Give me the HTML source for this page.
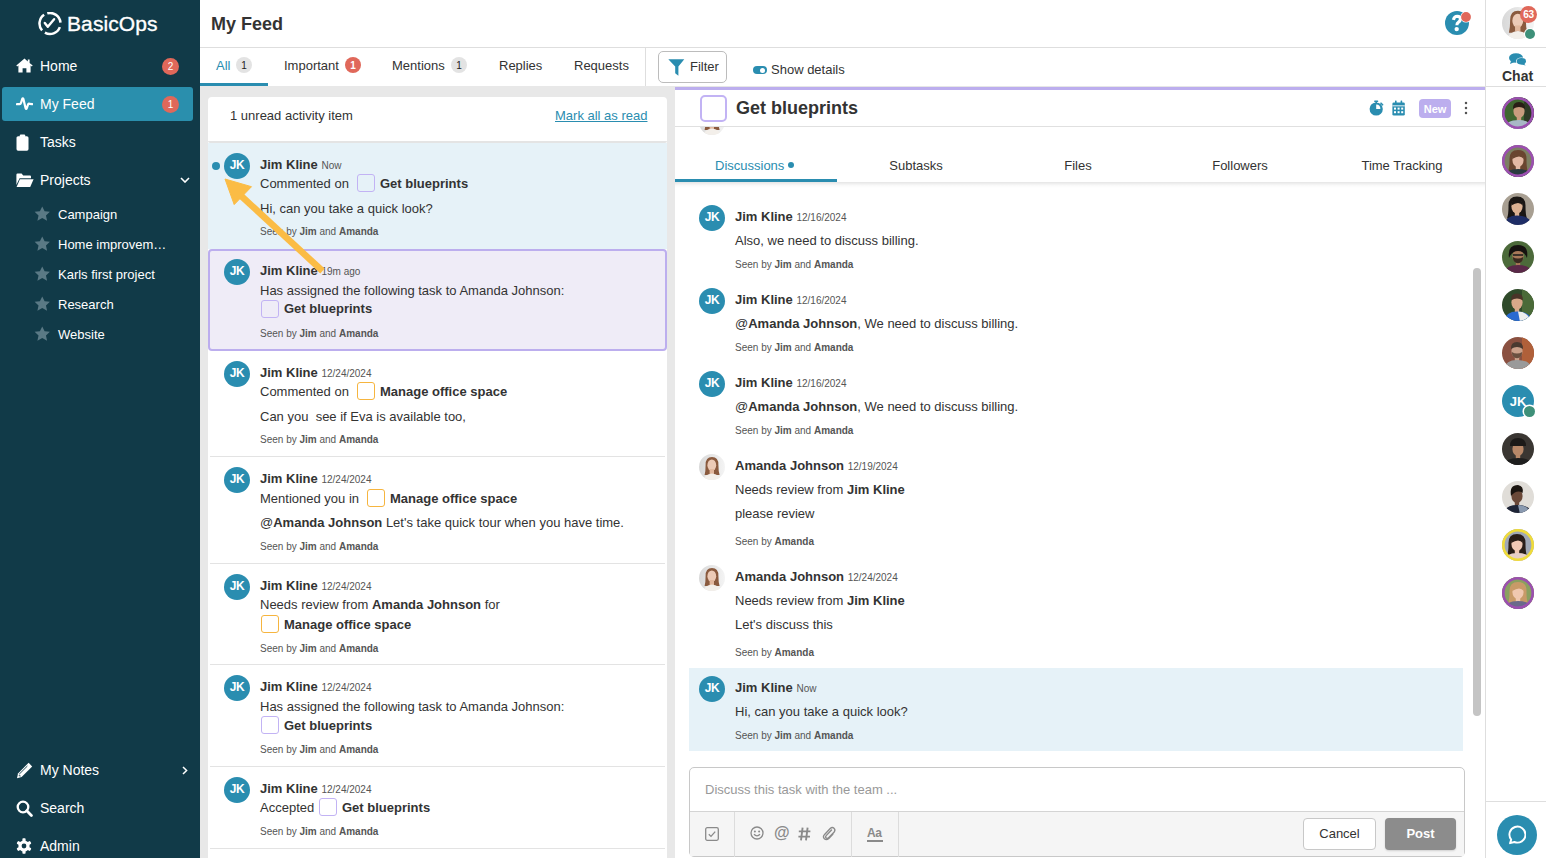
<!DOCTYPE html>
<html><head><meta charset="utf-8"><title>My Feed</title>
<style>
*{box-sizing:border-box;margin:0;padding:0}
html,body{width:1546px;height:858px;overflow:hidden;background:#fff;font-family:"Liberation Sans",sans-serif;color:#333}
.a{position:absolute}
.t{position:absolute;white-space:nowrap}
b{font-weight:700}
</style></head><body>
<div class="a" style="left:0px;top:0px;width:200px;height:858px;background:#113a48;"></div>
<svg class="a" style="left:38px;top:12px" width="24" height="24" viewBox="0 0 24 24">
<path d="M6.13 2.8 A10.5 10.5 0 0 0 4.08 18.39" fill="none" stroke="#fff" stroke-width="2.5" stroke-linecap="butt"/>
<path d="M9.28 1.36 A10.5 10.5 0 0 1 22.46 10.58" fill="none" stroke="#fff" stroke-width="2.5" stroke-linecap="butt"/>
<path d="M21.87 15.09 A10.5 10.5 0 0 1 6.91 20.68" fill="none" stroke="#fff" stroke-width="2.5" stroke-linecap="butt"/>
<path d="M6.8 10.9 L9.8 14.7 L16.1 7.2" fill="none" stroke="#fff" stroke-width="2.4" stroke-linecap="round" stroke-linejoin="round"/>
</svg>
<div class="t" style="left:67px;top:13px;font-size:21px;line-height:21px;color:#fff;letter-spacing:0.1px;-webkit-text-stroke:0.35px #fff">BasicOps</div>
<div class="a" style="left:2px;top:87px;width:191px;height:34px;background:#2a8fad;border-radius:3px"></div>
<div class="t" style="left:40px;top:59px;font-size:14px;line-height:14px;color:#fff">Home</div>
<div class="a" style="left:162px;top:58px;width:17px;height:17px;background:#e0685a;border-radius:50%"></div>
<div class="t" style="left:162px;top:62px;font-size:10px;line-height:10px;color:#fff;width:17px;text-align:center">2</div>
<div class="t" style="left:40px;top:97px;font-size:14px;line-height:14px;color:#fff">My Feed</div>
<div class="a" style="left:162px;top:96px;width:17px;height:17px;background:#e0685a;border-radius:50%"></div>
<div class="t" style="left:162px;top:100px;font-size:10px;line-height:10px;color:#fff;width:17px;text-align:center">1</div>
<div class="t" style="left:40px;top:135px;font-size:14px;line-height:14px;color:#fff">Tasks</div>
<div class="t" style="left:40px;top:173px;font-size:14px;line-height:14px;color:#fff">Projects</div>
<svg class="a" style="left:16px;top:58px" width="17" height="15" viewBox="0 0 17 15"><path d="M8.5 0.6 L0.3 7.6 L1.2 8.6 L2.4 7.6 L2.4 14.6 L6.6 14.6 L6.6 10.2 L10.4 10.2 L10.4 14.6 L14.6 14.6 L14.6 7.6 L15.8 8.6 L16.7 7.6 L13.6 4.9 L13.6 1.5 L11.8 1.5 L11.8 3.4 Z" fill="#fff"/></svg>
<svg class="a" style="left:16px;top:97px" width="17" height="14" viewBox="0 0 17 14"><path d="M0.9 7.2 L3.6 7.2 Q4.6 7.2 5.1 5.6 L6.2 2 Q6.8 0.6 7.4 2 L9.6 11.2 Q10.2 12.8 10.8 11.2 L12 7.6 Q12.6 6.2 13.4 6.8 L16.2 7.2" fill="none" stroke="#fff" stroke-width="2.2" stroke-linejoin="round" stroke-linecap="round"/></svg>
<svg class="a" style="left:16px;top:134px" width="14" height="17" viewBox="0 0 14 17"><rect x="0.5" y="2.2" width="12" height="14.5" rx="1.6" fill="#fff"/><rect x="3.8" y="0.6" width="5.4" height="3.2" rx="1" fill="#fff"/></svg>
<svg class="a" style="left:16px;top:173px" width="18" height="15" viewBox="0 0 18 15"><path d="M0.4 1.8 Q0.4 0.6 1.6 0.6 L5.6 0.6 L7.2 2.4 L14 2.4 Q15 2.4 15 3.4 L15 5.2 L3.6 5.2 L0.4 12 Z" fill="#fff"/><path d="M3.9 6.3 L17.6 6.3 L14.2 13.9 L0.6 13.9 Z" fill="#fff"/></svg>
<svg class="a" style="left:180px;top:177px" width="10" height="6" viewBox="0 0 10 6"><path d="M1 1 L5 5 L9 1" fill="none" stroke="#fff" stroke-width="1.6"/></svg>
<svg class="a" style="left:33.5px;top:206px" width="16.5" height="16" viewBox="0 0 16 15.5"><path d="M8 0.4 L10.3 5 L15.4 5.6 L11.6 9.1 L12.7 14.2 L8 11.6 L3.3 14.2 L4.4 9.1 L0.6 5.6 L5.7 5 Z" fill="#5a7985"/></svg>
<div class="t" style="left:58px;top:208px;font-size:13px;line-height:13px;color:#fff">Campaign</div>
<svg class="a" style="left:33.5px;top:236px" width="16.5" height="16" viewBox="0 0 16 15.5"><path d="M8 0.4 L10.3 5 L15.4 5.6 L11.6 9.1 L12.7 14.2 L8 11.6 L3.3 14.2 L4.4 9.1 L0.6 5.6 L5.7 5 Z" fill="#5a7985"/></svg>
<div class="t" style="left:58px;top:238px;font-size:13px;line-height:13px;color:#fff">Home improvem…</div>
<svg class="a" style="left:33.5px;top:266px" width="16.5" height="16" viewBox="0 0 16 15.5"><path d="M8 0.4 L10.3 5 L15.4 5.6 L11.6 9.1 L12.7 14.2 L8 11.6 L3.3 14.2 L4.4 9.1 L0.6 5.6 L5.7 5 Z" fill="#5a7985"/></svg>
<div class="t" style="left:58px;top:268px;font-size:13px;line-height:13px;color:#fff">Karls first project</div>
<svg class="a" style="left:33.5px;top:296px" width="16.5" height="16" viewBox="0 0 16 15.5"><path d="M8 0.4 L10.3 5 L15.4 5.6 L11.6 9.1 L12.7 14.2 L8 11.6 L3.3 14.2 L4.4 9.1 L0.6 5.6 L5.7 5 Z" fill="#5a7985"/></svg>
<div class="t" style="left:58px;top:298px;font-size:13px;line-height:13px;color:#fff">Research</div>
<svg class="a" style="left:33.5px;top:326px" width="16.5" height="16" viewBox="0 0 16 15.5"><path d="M8 0.4 L10.3 5 L15.4 5.6 L11.6 9.1 L12.7 14.2 L8 11.6 L3.3 14.2 L4.4 9.1 L0.6 5.6 L5.7 5 Z" fill="#5a7985"/></svg>
<div class="t" style="left:58px;top:328px;font-size:13px;line-height:13px;color:#fff">Website</div>
<div class="t" style="left:40px;top:763px;font-size:14px;line-height:14px;color:#fff">My Notes</div>
<div class="t" style="left:40px;top:801px;font-size:14px;line-height:14px;color:#fff">Search</div>
<div class="t" style="left:40px;top:839px;font-size:14px;line-height:14px;color:#fff">Admin</div>
<svg class="a" style="left:16px;top:762px" width="17" height="17" viewBox="0 0 17 17"><path d="M12.6 0.8 L16.2 4.4 L5.6 15 L1 16.2 L2 11.4 Z" fill="#fff"/><path d="M3.2 12.2 L11.4 4 M2.8 13.6 L4.6 14" stroke="#113a48" stroke-width="0.9"/></svg>
<svg class="a" style="left:182px;top:766px" width="6" height="9" viewBox="0 0 6 9"><path d="M1 1 L4.6 4.5 L1 8" fill="none" stroke="#fff" stroke-width="1.5"/></svg>
<svg class="a" style="left:16px;top:800px" width="17" height="17" viewBox="0 0 17 17"><circle cx="7" cy="7" r="5.3" fill="none" stroke="#fff" stroke-width="2.3"/><path d="M10.8 10.8 L15.4 15.4" stroke="#fff" stroke-width="2.8" stroke-linecap="round"/></svg>
<svg class="a" style="left:16px;top:838px" width="16" height="16" viewBox="0 0 16 16"><g fill="#fff"><circle cx="8" cy="8" r="5.6"/><rect x="6.4" y="0.3" width="3.2" height="15.4" rx="0.8"/><rect x="6.4" y="0.3" width="3.2" height="15.4" rx="0.8" transform="rotate(60 8 8)"/><rect x="6.4" y="0.3" width="3.2" height="15.4" rx="0.8" transform="rotate(120 8 8)"/></g><circle cx="8" cy="8" r="2.4" fill="#113a48"/></svg>
<div class="a" style="left:200px;top:47px;width:1285px;height:1px;background:#dedede;"></div>
<div class="t" style="left:211px;top:15px;font-size:18px;line-height:18px;font-weight:700;color:#333333">My Feed</div>
<svg class="a" style="left:1444px;top:10px" width="30" height="26" viewBox="0 0 30 26">
<circle cx="13" cy="13" r="12" fill="#2a8db0"/>
<path d="M9.4 9.8 Q10.2 6.3 13.3 6.3 Q16.4 6.4 16.4 9.2 Q16.3 11.1 14.3 12.3 Q12.9 13.1 12.9 15.2" fill="none" stroke="#fff" stroke-width="3.1" stroke-linecap="butt"/>
<circle cx="12.7" cy="19.1" r="2.2" fill="#fff"/>
<circle cx="22" cy="7" r="5.6" fill="#fff"/>
<circle cx="22" cy="7" r="4.9" fill="#e0685a"/>
</svg>
<div class="t" style="left:216px;top:59px;font-size:13px;line-height:13px;color:#2a8db0">All</div>
<div class="a" style="left:236px;top:57px;width:16px;height:16px;background:#e3e3e3;border-radius:50%"></div>
<div class="t" style="left:236px;top:61px;font-size:10px;line-height:10px;color:#222;width:16px;text-align:center">1</div>
<div class="a" style="left:200px;top:83px;width:68px;height:3px;background:#2a8db0;"></div>
<div class="t" style="left:284px;top:59px;font-size:13px;line-height:13px;color:#333333">Important</div>
<div class="a" style="left:345px;top:57px;width:16px;height:16px;background:#e0685a;border-radius:50%"></div>
<div class="t" style="left:345px;top:61px;font-size:10px;line-height:10px;font-weight:700;color:#fff;width:16px;text-align:center">1</div>
<div class="t" style="left:392px;top:59px;font-size:13px;line-height:13px;color:#333333">Mentions</div>
<div class="a" style="left:451px;top:57px;width:16px;height:16px;background:#e3e3e3;border-radius:50%"></div>
<div class="t" style="left:451px;top:61px;font-size:10px;line-height:10px;color:#222;width:16px;text-align:center">1</div>
<div class="t" style="left:499px;top:59px;font-size:13px;line-height:13px;color:#333333">Replies</div>
<div class="t" style="left:574px;top:59px;font-size:13px;line-height:13px;color:#333333">Requests</div>
<div class="a" style="left:645px;top:47px;width:1px;height:39px;background:#dedede;"></div>
<div class="a" style="left:658px;top:51px;width:69px;height:32px;background:#fff;border:1px solid #bcbcbc;border-radius:5px;box-sizing:border-box"></div>
<svg class="a" style="left:668px;top:59px" width="17" height="17" viewBox="0 0 17 17"><path d="M0.3 0.3 L16.3 0.3 L10.4 7.4 L10.4 16.8 L7.2 14.2 L7.2 7.4 Z" fill="#2a8db0"/></svg>
<div class="t" style="left:690px;top:60px;font-size:13px;line-height:13px;color:#333333">Filter</div>
<div class="a" style="left:753px;top:66px;width:14px;height:8px;background:#2a8db0;border-radius:4px"></div>
<div class="a" style="left:760px;top:67.5px;width:5px;height:5px;background:#fff;border-radius:50%"></div>
<div class="t" style="left:771px;top:63px;font-size:13px;line-height:13px;color:#333333">Show details</div>
<div class="a" style="left:200px;top:86px;width:475px;height:772px;background:#e8e8e8;"></div>
<div class="a" style="left:208px;top:97px;width:459px;height:761px;background:#fff;border-radius:4px 4px 0 0"></div>
<div class="t" style="left:230px;top:109px;font-size:13px;line-height:13px;color:#333333">1 unread activity item</div>
<div class="t" style="left:555px;top:109px;font-size:13px;line-height:13px;color:#2a8db0;text-decoration:underline">Mark all as read</div>
<div class="a" style="left:208px;top:143px;width:459px;height:106px;background:#e6f2f8;"></div>
<div class="a" style="left:208px;top:141px;width:459px;height:2px;background:#e4e4e4;border-radius:0 0 3px 3px"></div>
<div class="a" style="left:212px;top:162px;width:8px;height:8px;background:#2a8db0;border-radius:50%"></div>
<div class="a" style="left:224.0px;top:153.0px;width:26px;height:26px;background:#2a8db0;border-radius:50%"></div>
<div class="t" style="left:224.0px;top:159px;font-size:12px;line-height:12px;font-weight:700;color:#fff;width:26px;text-align:center;letter-spacing:-0.5px">JK</div>
<div class="t" style="left:260px;top:158px;font-size:13px;line-height:13px;font-weight:700;color:#333333">Jim Kline <span style="font-size:10px;font-weight:400;color:#555">Now</span></div>
<div class="t" style="left:260px;top:177px;font-size:13px;line-height:13px;color:#333333">Commented on</div>
<div class="a" style="left:357px;top:174px;width:18px;height:18px;background:transparent;border:1.5px solid #c2b3f4;border-radius:3px;box-sizing:border-box"></div>
<div class="t" style="left:380px;top:177px;font-size:13px;line-height:13px;font-weight:700;color:#333333">Get blueprints</div>
<div class="t" style="left:260px;top:201.5px;font-size:13px;line-height:13px;color:#333333">Hi, can you take a quick look?</div>
<div class="t" style="left:260px;top:227px;font-size:10px;line-height:10px;color:#555555">Seen by <b>Jim</b> and <b>Amanda</b></div>
<div class="a" style="left:208px;top:249px;width:459px;height:102px;background:#efecf7;border:2px solid #bcaeee;border-radius:4px;box-sizing:border-box"></div>
<div class="a" style="left:224.0px;top:259.0px;width:26px;height:26px;background:#2a8db0;border-radius:50%"></div>
<div class="t" style="left:224.0px;top:265px;font-size:12px;line-height:12px;font-weight:700;color:#fff;width:26px;text-align:center;letter-spacing:-0.5px">JK</div>
<div class="t" style="left:260px;top:264px;font-size:13px;line-height:13px;font-weight:700;color:#333333">Jim Kline <span style="font-size:10px;font-weight:400;color:#555">19m ago</span></div>
<div class="t" style="left:260px;top:284px;font-size:13px;line-height:13px;color:#333333">Has assigned the following task to Amanda Johnson:</div>
<div class="a" style="left:261px;top:300px;width:18px;height:18px;background:transparent;border:1.5px solid #c2b3f4;border-radius:3px;box-sizing:border-box"></div>
<div class="t" style="left:284px;top:302px;font-size:13px;line-height:13px;font-weight:700;color:#333333">Get blueprints</div>
<div class="t" style="left:260px;top:329px;font-size:10px;line-height:10px;color:#555555">Seen by <b>Jim</b> and <b>Amanda</b></div>
<div class="a" style="left:224.0px;top:361.0px;width:26px;height:26px;background:#2a8db0;border-radius:50%"></div>
<div class="t" style="left:224.0px;top:367px;font-size:12px;line-height:12px;font-weight:700;color:#fff;width:26px;text-align:center;letter-spacing:-0.5px">JK</div>
<div class="t" style="left:260px;top:366px;font-size:13px;line-height:13px;font-weight:700;color:#333333">Jim Kline <span style="font-size:10px;font-weight:400;color:#555">12/24/2024</span></div>
<div class="t" style="left:260px;top:385px;font-size:13px;line-height:13px;color:#333333">Commented on</div>
<div class="a" style="left:357px;top:382px;width:18px;height:18px;background:transparent;border:1.5px solid #f6b53f;border-radius:3px;box-sizing:border-box"></div>
<div class="t" style="left:380px;top:385px;font-size:13px;line-height:13px;font-weight:700;color:#333333">Manage office space</div>
<div class="t" style="left:260px;top:409.5px;font-size:13px;line-height:13px;color:#333333">Can you&nbsp; see if Eva is available too,</div>
<div class="t" style="left:260px;top:435px;font-size:10px;line-height:10px;color:#555555">Seen by <b>Jim</b> and <b>Amanda</b></div>
<div class="a" style="left:210px;top:456px;width:455px;height:1px;background:#e3e3e3;"></div>
<div class="a" style="left:224.0px;top:467.0px;width:26px;height:26px;background:#2a8db0;border-radius:50%"></div>
<div class="t" style="left:224.0px;top:473px;font-size:12px;line-height:12px;font-weight:700;color:#fff;width:26px;text-align:center;letter-spacing:-0.5px">JK</div>
<div class="t" style="left:260px;top:472px;font-size:13px;line-height:13px;font-weight:700;color:#333333">Jim Kline <span style="font-size:10px;font-weight:400;color:#555">12/24/2024</span></div>
<div class="t" style="left:260px;top:492px;font-size:13px;line-height:13px;color:#333333">Mentioned you in</div>
<div class="a" style="left:367px;top:489px;width:18px;height:18px;background:transparent;border:1.5px solid #f6b53f;border-radius:3px;box-sizing:border-box"></div>
<div class="t" style="left:390px;top:492px;font-size:13px;line-height:13px;font-weight:700;color:#333333">Manage office space</div>
<div class="t" style="left:260px;top:516px;font-size:13px;line-height:13px;color:#333333">@<b>Amanda Johnson</b> Let's take quick tour when you have time.</div>
<div class="t" style="left:260px;top:542px;font-size:10px;line-height:10px;color:#555555">Seen by <b>Jim</b> and <b>Amanda</b></div>
<div class="a" style="left:210px;top:563px;width:455px;height:1px;background:#e3e3e3;"></div>
<div class="a" style="left:224.0px;top:574.0px;width:26px;height:26px;background:#2a8db0;border-radius:50%"></div>
<div class="t" style="left:224.0px;top:580px;font-size:12px;line-height:12px;font-weight:700;color:#fff;width:26px;text-align:center;letter-spacing:-0.5px">JK</div>
<div class="t" style="left:260px;top:579px;font-size:13px;line-height:13px;font-weight:700;color:#333333">Jim Kline <span style="font-size:10px;font-weight:400;color:#555">12/24/2024</span></div>
<div class="t" style="left:260px;top:598px;font-size:13px;line-height:13px;color:#333333">Needs review from <b>Amanda Johnson</b> for</div>
<div class="a" style="left:261px;top:615px;width:18px;height:18px;background:transparent;border:1.5px solid #f6b53f;border-radius:3px;box-sizing:border-box"></div>
<div class="t" style="left:284px;top:618px;font-size:13px;line-height:13px;font-weight:700;color:#333333">Manage office space</div>
<div class="t" style="left:260px;top:644px;font-size:10px;line-height:10px;color:#555555">Seen by <b>Jim</b> and <b>Amanda</b></div>
<div class="a" style="left:210px;top:664px;width:455px;height:1px;background:#e3e3e3;"></div>
<div class="a" style="left:224.0px;top:675.0px;width:26px;height:26px;background:#2a8db0;border-radius:50%"></div>
<div class="t" style="left:224.0px;top:681px;font-size:12px;line-height:12px;font-weight:700;color:#fff;width:26px;text-align:center;letter-spacing:-0.5px">JK</div>
<div class="t" style="left:260px;top:680px;font-size:13px;line-height:13px;font-weight:700;color:#333333">Jim Kline <span style="font-size:10px;font-weight:400;color:#555">12/24/2024</span></div>
<div class="t" style="left:260px;top:700px;font-size:13px;line-height:13px;color:#333333">Has assigned the following task to Amanda Johnson:</div>
<div class="a" style="left:261px;top:716px;width:18px;height:18px;background:transparent;border:1.5px solid #c2b3f4;border-radius:3px;box-sizing:border-box"></div>
<div class="t" style="left:284px;top:719px;font-size:13px;line-height:13px;font-weight:700;color:#333333">Get blueprints</div>
<div class="t" style="left:260px;top:745px;font-size:10px;line-height:10px;color:#555555">Seen by <b>Jim</b> and <b>Amanda</b></div>
<div class="a" style="left:210px;top:766px;width:455px;height:1px;background:#e3e3e3;"></div>
<div class="a" style="left:224.0px;top:777.0px;width:26px;height:26px;background:#2a8db0;border-radius:50%"></div>
<div class="t" style="left:224.0px;top:783px;font-size:12px;line-height:12px;font-weight:700;color:#fff;width:26px;text-align:center;letter-spacing:-0.5px">JK</div>
<div class="t" style="left:260px;top:782px;font-size:13px;line-height:13px;font-weight:700;color:#333333">Jim Kline <span style="font-size:10px;font-weight:400;color:#555">12/24/2024</span></div>
<div class="t" style="left:260px;top:801px;font-size:13px;line-height:13px;color:#333333">Accepted</div>
<div class="a" style="left:319px;top:798px;width:18px;height:18px;background:transparent;border:1.5px solid #c2b3f4;border-radius:3px;box-sizing:border-box"></div>
<div class="t" style="left:342px;top:801px;font-size:13px;line-height:13px;font-weight:700;color:#333333">Get blueprints</div>
<div class="t" style="left:260px;top:827px;font-size:10px;line-height:10px;color:#555555">Seen by <b>Jim</b> and <b>Amanda</b></div>
<div class="a" style="left:210px;top:848px;width:455px;height:1px;background:#e3e3e3;"></div>
<svg class="a" style="left:200px;top:160px" width="140" height="130" viewBox="200 160 140 130">
<line x1="322.5" y1="271" x2="238" y2="193" stroke="#fbbc45" stroke-width="6.5" stroke-linecap="butt"/>
<path d="M225 179 L251.5 186.7 L234.2 204.6 Z" fill="#fbbc45" stroke="#fbbc45" stroke-width="1" stroke-linejoin="round"/>
</svg>
<div class="a" style="left:675px;top:86px;width:810px;height:772px;background:#fff;"></div>
<div class="a" style="left:675px;top:87px;width:810px;height:3px;background:#bcaeee;"></div>
<div class="a" style="left:675px;top:86px;width:810px;height:1px;background:#e6e6e6;"></div>
<svg class="a" style="left:699.0px;top:109.0px" width="26" height="26" viewBox="0 0 26 26">
<defs><clipPath id="cclip"><circle cx="13" cy="13" r="13"/></clipPath><linearGradient id="gclip" x1="0" x2="1"><stop offset="0" stop-color="#d8d8d8"/><stop offset="1" stop-color="#f4f4f4"/></linearGradient></defs>
<g clip-path="url(#cclip)"><rect width="26" height="26" fill="url(#gclip)"/>
<path d="M13 3 Q6.4 3 6.6 11 Q6.6 17 5.6 21 L20.6 21 Q19.4 17 19.4 11 Q19.6 3 13 3 Z" fill="#8a5a3e"/>
<ellipse cx="12.8" cy="11.2" rx="4.4" ry="5.8" fill="#eccab6"/>
<rect x="10.6" y="15" width="4.4" height="5" fill="#e2b89e"/>
<path d="M4 27 Q5 20.5 13 19.6 Q21 20.5 22 27 Z" fill="#f3efea"/></g></svg>
<div class="a" style="left:675px;top:90px;width:810px;height:36px;background:#fff;"></div>
<div class="a" style="left:675px;top:126px;width:810px;height:1px;background:#e0e0e0;"></div>
<div class="a" style="left:700px;top:95px;width:27px;height:27px;background:transparent;border:2px solid #c2b3f4;border-radius:5px;box-sizing:border-box"></div>
<div class="t" style="left:736px;top:99px;font-size:18px;line-height:18px;font-weight:700;color:#333333">Get blueprints</div>
<svg class="a" style="left:1369px;top:100px" width="16" height="16" viewBox="0 0 16 16">
<circle cx="7.2" cy="9" r="6.6" fill="#2a8db0"/>
<rect x="5.2" y="0.4" width="4" height="1.6" rx="0.5" fill="#2a8db0"/>
<rect x="6.4" y="1.5" width="1.6" height="1.6" fill="#2a8db0"/>
<path d="M12 3.2 L13.6 4.8" stroke="#2a8db0" stroke-width="1.6" stroke-linecap="round"/>
<path d="M7.2 4.6 L7.2 9 L11.4 9 A4.4 4.4 0 0 0 7.2 4.6 Z" fill="#fff"/>
</svg>
<svg class="a" style="left:1392px;top:100px" width="14" height="16" viewBox="0 0 14 16">
<rect x="0.4" y="2.4" width="12.4" height="13.2" rx="1.4" fill="#2a8db0"/>
<rect x="3" y="0.4" width="1.6" height="3.4" rx="0.6" fill="#2a8db0"/>
<rect x="8.6" y="0.4" width="1.6" height="3.4" rx="0.6" fill="#2a8db0"/>
<rect x="0.4" y="5.4" width="12.4" height="0.9" fill="#fff"/>
<g fill="#fff"><rect x="2" y="7.6" width="2" height="2"/><rect x="5.6" y="7.6" width="2" height="2"/><rect x="9.2" y="7.6" width="2" height="2"/>
<rect x="2" y="11.2" width="2" height="2"/><rect x="5.6" y="11.2" width="2" height="2"/><rect x="9.2" y="11.2" width="2" height="2"/></g>
</svg>
<div class="a" style="left:1419px;top:99px;width:32px;height:19px;background:#bcaeee;border-radius:4px"></div>
<div class="t" style="left:1419px;top:104px;font-size:11px;line-height:11px;font-weight:700;color:#fff;width:32px;text-align:center">New</div>
<svg class="a" style="left:1462px;top:100px" width="8" height="16" viewBox="0 0 8 16"><circle cx="4" cy="3" r="1.25" fill="#555"/><circle cx="4" cy="8" r="1.25" fill="#555"/><circle cx="4" cy="13" r="1.25" fill="#555"/></svg>
<div class="t" style="left:715px;top:159px;font-size:13px;line-height:13px;color:#2a8db0">Discussions</div>
<div class="a" style="left:788px;top:162px;width:6px;height:6px;background:#2a8db0;border-radius:50%"></div>
<div class="a" style="left:675px;top:179px;width:162px;height:3px;background:#2a8db0;"></div>
<div class="t" style="left:856px;top:159px;font-size:13px;line-height:13px;color:#333333;width:120px;text-align:center">Subtasks</div>
<div class="t" style="left:1018px;top:159px;font-size:13px;line-height:13px;color:#333333;width:120px;text-align:center">Files</div>
<div class="t" style="left:1180px;top:159px;font-size:13px;line-height:13px;color:#333333;width:120px;text-align:center">Followers</div>
<div class="t" style="left:1342px;top:159px;font-size:13px;line-height:13px;color:#333333;width:120px;text-align:center">Time Tracking</div>
<div class="a" style="left:675px;top:182px;width:810px;height:6px;background:linear-gradient(rgba(0,0,0,0.1),rgba(0,0,0,0.02) 60%,rgba(0,0,0,0));"></div>
<div class="a" style="left:699.0px;top:205.0px;width:26px;height:26px;background:#2a8db0;border-radius:50%"></div>
<div class="t" style="left:699.0px;top:211px;font-size:12px;line-height:12px;font-weight:700;color:#fff;width:26px;text-align:center;letter-spacing:-0.5px">JK</div>
<div class="t" style="left:735px;top:210px;font-size:13px;line-height:13px;font-weight:700;color:#333333">Jim Kline <span style="font-size:10px;font-weight:400;color:#555">12/16/2024</span></div>
<div class="t" style="left:735px;top:234px;font-size:13px;line-height:13px;color:#333333">Also, we need to discuss billing.</div>
<div class="t" style="left:735px;top:260px;font-size:10px;line-height:10px;color:#555555">Seen by <b>Jim</b> and <b>Amanda</b></div>
<div class="a" style="left:699.0px;top:288.0px;width:26px;height:26px;background:#2a8db0;border-radius:50%"></div>
<div class="t" style="left:699.0px;top:294px;font-size:12px;line-height:12px;font-weight:700;color:#fff;width:26px;text-align:center;letter-spacing:-0.5px">JK</div>
<div class="t" style="left:735px;top:293px;font-size:13px;line-height:13px;font-weight:700;color:#333333">Jim Kline <span style="font-size:10px;font-weight:400;color:#555">12/16/2024</span></div>
<div class="t" style="left:735px;top:317px;font-size:13px;line-height:13px;color:#333333">@<b>Amanda Johnson</b>, We need to discuss billing.</div>
<div class="t" style="left:735px;top:343px;font-size:10px;line-height:10px;color:#555555">Seen by <b>Jim</b> and <b>Amanda</b></div>
<div class="a" style="left:699.0px;top:371.0px;width:26px;height:26px;background:#2a8db0;border-radius:50%"></div>
<div class="t" style="left:699.0px;top:377px;font-size:12px;line-height:12px;font-weight:700;color:#fff;width:26px;text-align:center;letter-spacing:-0.5px">JK</div>
<div class="t" style="left:735px;top:376px;font-size:13px;line-height:13px;font-weight:700;color:#333333">Jim Kline <span style="font-size:10px;font-weight:400;color:#555">12/16/2024</span></div>
<div class="t" style="left:735px;top:400px;font-size:13px;line-height:13px;color:#333333">@<b>Amanda Johnson</b>, We need to discuss billing.</div>
<div class="t" style="left:735px;top:426px;font-size:10px;line-height:10px;color:#555555">Seen by <b>Jim</b> and <b>Amanda</b></div>
<svg class="a" style="left:699.0px;top:454.0px" width="26" height="26" viewBox="0 0 26 26">
<defs><clipPath id="c712_467"><circle cx="13" cy="13" r="13"/></clipPath><linearGradient id="g712_467" x1="0" x2="1"><stop offset="0" stop-color="#d8d8d8"/><stop offset="1" stop-color="#f4f4f4"/></linearGradient></defs>
<g clip-path="url(#c712_467)"><rect width="26" height="26" fill="url(#g712_467)"/>
<path d="M13 3 Q6.4 3 6.6 11 Q6.6 17 5.6 21 L20.6 21 Q19.4 17 19.4 11 Q19.6 3 13 3 Z" fill="#8a5a3e"/>
<ellipse cx="12.8" cy="11.2" rx="4.4" ry="5.8" fill="#eccab6"/>
<rect x="10.6" y="15" width="4.4" height="5" fill="#e2b89e"/>
<path d="M4 27 Q5 20.5 13 19.6 Q21 20.5 22 27 Z" fill="#f3efea"/></g></svg>
<div class="t" style="left:735px;top:459px;font-size:13px;line-height:13px;font-weight:700;color:#333333">Amanda Johnson <span style="font-size:10px;font-weight:400;color:#555">12/19/2024</span></div>
<div class="t" style="left:735px;top:483px;font-size:13px;line-height:13px;color:#333333">Needs review from <b>Jim Kline</b></div>
<div class="t" style="left:735px;top:507px;font-size:13px;line-height:13px;color:#333333">please review</div>
<div class="t" style="left:735px;top:537px;font-size:10px;line-height:10px;color:#555555">Seen by <b>Amanda</b></div>
<svg class="a" style="left:699.0px;top:565.0px" width="26" height="26" viewBox="0 0 26 26">
<defs><clipPath id="c712_578"><circle cx="13" cy="13" r="13"/></clipPath><linearGradient id="g712_578" x1="0" x2="1"><stop offset="0" stop-color="#d8d8d8"/><stop offset="1" stop-color="#f4f4f4"/></linearGradient></defs>
<g clip-path="url(#c712_578)"><rect width="26" height="26" fill="url(#g712_578)"/>
<path d="M13 3 Q6.4 3 6.6 11 Q6.6 17 5.6 21 L20.6 21 Q19.4 17 19.4 11 Q19.6 3 13 3 Z" fill="#8a5a3e"/>
<ellipse cx="12.8" cy="11.2" rx="4.4" ry="5.8" fill="#eccab6"/>
<rect x="10.6" y="15" width="4.4" height="5" fill="#e2b89e"/>
<path d="M4 27 Q5 20.5 13 19.6 Q21 20.5 22 27 Z" fill="#f3efea"/></g></svg>
<div class="t" style="left:735px;top:570px;font-size:13px;line-height:13px;font-weight:700;color:#333333">Amanda Johnson <span style="font-size:10px;font-weight:400;color:#555">12/24/2024</span></div>
<div class="t" style="left:735px;top:594px;font-size:13px;line-height:13px;color:#333333">Needs review from <b>Jim Kline</b></div>
<div class="t" style="left:735px;top:618px;font-size:13px;line-height:13px;color:#333333">Let's discuss this</div>
<div class="t" style="left:735px;top:648px;font-size:10px;line-height:10px;color:#555555">Seen by <b>Amanda</b></div>
<div class="a" style="left:689px;top:668px;width:774px;height:83px;background:#e6f2f8;"></div>
<div class="a" style="left:699.0px;top:676.0px;width:26px;height:26px;background:#2a8db0;border-radius:50%"></div>
<div class="t" style="left:699.0px;top:682px;font-size:12px;line-height:12px;font-weight:700;color:#fff;width:26px;text-align:center;letter-spacing:-0.5px">JK</div>
<div class="t" style="left:735px;top:681px;font-size:13px;line-height:13px;font-weight:700;color:#333333">Jim Kline <span style="font-size:10px;font-weight:400;color:#555">Now</span></div>
<div class="t" style="left:735px;top:705px;font-size:13px;line-height:13px;color:#333333">Hi, can you take a quick look?</div>
<div class="t" style="left:735px;top:731px;font-size:10px;line-height:10px;color:#555555">Seen by <b>Jim</b> and <b>Amanda</b></div>
<div class="a" style="left:1473px;top:268px;width:8px;height:448px;background:#c4c4c4;border-radius:4px"></div>
<div class="a" style="left:689px;top:767px;width:776px;height:90px;background:#fff;border:1px solid #c8c8c8;border-radius:5px;box-sizing:border-box"></div>
<div class="a" style="left:690px;top:811px;width:774px;height:45px;background:#f5f5f5;border-top:1px solid #d4d4d4;box-sizing:border-box"></div>
<div class="t" style="left:705px;top:783px;font-size:13px;line-height:13px;color:#999">Discuss this task with the team ...</div>
<div class="a" style="left:734px;top:812px;width:1px;height:45px;background:#dcdcdc;"></div>
<div class="a" style="left:851px;top:812px;width:1px;height:45px;background:#dcdcdc;"></div>
<div class="a" style="left:898px;top:812px;width:1px;height:45px;background:#dcdcdc;"></div>
<svg class="a" style="left:705px;top:827px" width="14" height="14" viewBox="0 0 14 14"><rect x="0.7" y="0.7" width="12.6" height="12.6" rx="1.5" fill="none" stroke="#8a8a8a" stroke-width="1.3"/><path d="M3.8 7.2 L6 9.4 L10.2 4.6" fill="none" stroke="#8a8a8a" stroke-width="1.3"/></svg>
<svg class="a" style="left:750px;top:826px" width="14" height="14" viewBox="0 0 14 14"><circle cx="7" cy="7" r="6" fill="none" stroke="#8a8a8a" stroke-width="1.3"/><circle cx="4.9" cy="5.6" r="1" fill="#8a8a8a"/><circle cx="9.1" cy="5.6" r="1" fill="#8a8a8a"/><path d="M4 8.2 Q7 11.4 10 8.2" fill="none" stroke="#8a8a8a" stroke-width="1.3"/></svg>
<div class="t" style="left:774px;top:825px;font-size:16px;line-height:16px;font-weight:700;color:#8a8a8a">@</div>
<svg class="a" style="left:798px;top:827px" width="13" height="14" viewBox="0 0 13 14"><path d="M4.6 0.6 L3 13.4 M9.6 0.6 L8 13.4 M0.8 4.4 L12.4 4.4 M0.4 9.6 L12 9.6" stroke="#8a8a8a" stroke-width="1.9"/></svg>
<svg class="a" style="left:822px;top:826px" width="14" height="15" viewBox="0 0 14 15"><path d="M9.5 4 L4.2 9.6 Q3 11 4.2 12 Q5.4 13 6.6 11.8 L12 6.2 Q13.8 4 12 2.2 Q10.2 0.6 8.2 2.6 L2.6 8.4 Q0.4 10.8 2.4 12.8 Q4.4 14.6 6.8 12.4 L10.8 8.2" fill="none" stroke="#8a8a8a" stroke-width="1.4" stroke-linecap="round"/></svg>
<div class="t" style="left:867px;top:827px;font-size:12px;line-height:12px;font-weight:700;color:#8a8a8a;letter-spacing:-0.5px">Aa</div>
<div class="a" style="left:867px;top:840px;width:16px;height:1.5px;background:#8a8a8a;"></div>
<div class="a" style="left:1303px;top:818px;width:73px;height:32px;background:#fff;border:1px solid #c8c8c8;border-radius:4px;box-sizing:border-box"></div>
<div class="t" style="left:1303px;top:827px;font-size:13px;line-height:13px;color:#333333;width:73px;text-align:center">Cancel</div>
<div class="a" style="left:1385px;top:818px;width:71px;height:32px;background:#8c8c8c;border-radius:4px;box-shadow:0 1px 2px rgba(0,0,0,0.15)"></div>
<div class="t" style="left:1385px;top:827px;font-size:13px;line-height:13px;font-weight:700;color:#fff;width:71px;text-align:center">Post</div>
<div class="a" style="left:1485px;top:0px;width:1px;height:858px;background:#dedede;"></div>
<div class="a" style="left:1486px;top:47px;width:60px;height:1px;background:#dedede;"></div>
<div class="a" style="left:1486px;top:86px;width:60px;height:1px;background:#dedede;"></div>
<div class="a" style="left:1486px;top:801px;width:60px;height:1px;background:#dedede;"></div>
<svg class="a" style="left:1502.0px;top:6.5px" width="32" height="32" viewBox="0 0 26 26">
<defs><clipPath id="cuser"><circle cx="13" cy="13" r="13"/></clipPath><linearGradient id="guser" x1="0" x2="1"><stop offset="0" stop-color="#d8d8d8"/><stop offset="1" stop-color="#f4f4f4"/></linearGradient></defs>
<g clip-path="url(#cuser)"><rect width="26" height="26" fill="url(#guser)"/>
<path d="M13 3 Q6.4 3 6.6 11 Q6.6 17 5.6 21 L20.6 21 Q19.4 17 19.4 11 Q19.6 3 13 3 Z" fill="#8a5a3e"/>
<ellipse cx="12.8" cy="11.2" rx="4.4" ry="5.8" fill="#eccab6"/>
<rect x="10.6" y="15" width="4.4" height="5" fill="#e2b89e"/>
<path d="M4 27 Q5 20.5 13 19.6 Q21 20.5 22 27 Z" fill="#f3efea"/></g></svg>
<div class="a" style="left:1520px;top:6px;width:17px;height:17px;background:#e0685a;border-radius:50%"></div>
<div class="t" style="left:1520px;top:10px;font-size:10px;line-height:10px;font-weight:700;color:#fff;width:17px;text-align:center;letter-spacing:-0.2px">63</div>
<div class="a" style="left:1525px;top:29px;width:10px;height:10px;background:#3e9079;border-radius:50%;box-shadow:0 0 0 1px #fff"></div>
<svg class="a" style="left:1509px;top:53px" width="18" height="13" viewBox="0 0 18 13">
<ellipse cx="7" cy="5" rx="7" ry="4.8" fill="#2a8db0"/>
<path d="M2 8 L1 11 L5.5 9 Z" fill="#2a8db0"/>
<ellipse cx="12.4" cy="8.2" rx="5.4" ry="3.8" fill="#fff"/>
<ellipse cx="12.4" cy="8.2" rx="4.6" ry="3.2" fill="#2a8db0"/>
<path d="M14.5 10 L16.6 12.6 L11 11 Z" fill="#2a8db0"/>
</svg>
<div class="t" style="left:1502px;top:69px;font-size:14px;line-height:14px;font-weight:700;color:#333333">Chat</div>
<svg class="a" style="left:1502.0px;top:97.0px" width="32" height="32" viewBox="0 0 32 32">
<defs><clipPath id="pr0"><circle cx="16" cy="16" r="16"/></clipPath></defs>
<g clip-path="url(#pr0)"><rect width="32" height="32" fill="#3f6630"/><rect x="22" width="32" height="32" fill="#2e3a26"/><rect x="14.8" y="18" width="4.4" height="6" fill="#c99c7e"/><path d="M2 33 Q3 23 17 23 Q29 23 30 33 Z" fill="#a8b8c6"/><ellipse cx="17" cy="14" rx="5.6" ry="7" fill="#c99c7e"/><path d="M11 12 Q10.6 5 17 5 Q23.4 5 23 12 Q17 8 11 12 Z" fill="#2a1e16"/></g><circle cx="16" cy="16" r="14.7" fill="none" stroke="#9b4fb0" stroke-width="2.6"/></svg>
<svg class="a" style="left:1502.0px;top:145.0px" width="32" height="32" viewBox="0 0 32 32">
<defs><clipPath id="pr1"><circle cx="16" cy="16" r="16"/></clipPath></defs>
<g clip-path="url(#pr1)"><rect width="32" height="32" fill="#7c7e62"/><path d="M16 5 Q7 5 7.5 15 Q7.5 23 6 27 L26 27 Q24.5 23 24.5 15 Q25 5 16 5 Z" fill="#6a4530"/><rect x="13.8" y="19" width="4.4" height="6" fill="#e4b9a5"/><path d="M2 33 Q3 24 16 24 Q29 24 30 33 Z" fill="#2a3a40"/><ellipse cx="16" cy="15" rx="5.6" ry="7" fill="#e4b9a5"/><path d="M10.2 14 Q11 7 16 7 Q21 7 21.8 14 Q18 9 10.2 14 Z" fill="#6a4530"/></g><circle cx="16" cy="16" r="14.7" fill="none" stroke="#9b4fb0" stroke-width="2.6"/></svg>
<svg class="a" style="left:1502.0px;top:193.0px" width="32" height="32" viewBox="0 0 32 32">
<defs><clipPath id="pr2"><circle cx="16" cy="16" r="16"/></clipPath></defs>
<g clip-path="url(#pr2)"><rect width="32" height="32" fill="#a89f92"/><path d="M15 3.5 Q6 3.5 6.5 13.5 Q6.5 21.5 5 25.5 L25 25.5 Q23.5 21.5 23.5 13.5 Q24 3.5 15 3.5 Z" fill="#1a1614"/><rect x="12.8" y="17.5" width="4.4" height="6" fill="#dcb192"/><path d="M2 33 Q3 22.5 15 22.5 Q29 22.5 30 33 Z" fill="#1e2d66"/><ellipse cx="15" cy="13.5" rx="5.6" ry="7" fill="#dcb192"/><path d="M9.2 12.5 Q10 5.5 15 5.5 Q20 5.5 20.8 12.5 Q17 7.5 9.2 12.5 Z" fill="#1a1614"/></g></svg>
<svg class="a" style="left:1502.0px;top:241.0px" width="32" height="32" viewBox="0 0 32 32">
<defs><clipPath id="pr3"><circle cx="16" cy="16" r="16"/></clipPath></defs>
<g clip-path="url(#pr3)"><rect width="32" height="32" fill="#4c6a3a"/><rect x="13.8" y="19" width="4.4" height="6" fill="#a87858"/><path d="M2 33 Q3 24 16 24 Q29 24 30 33 Z" fill="#5a2848"/><ellipse cx="16" cy="15" rx="5.6" ry="7" fill="#a87858"/><path d="M10.8 16 Q11 22 16 22.2 Q21 22 21.2 16 Q16 19 10.8 16 Z" fill="#3a2a20"/><path d="M7 17 Q5 4 16 4 Q27 4 25 17 Q22 10 16 10 Q10 10 7 17 Z" fill="#161210"/><path d="M11 14 L21 14" stroke="#1a1a1a" stroke-width="1.3"/></g></svg>
<svg class="a" style="left:1502.0px;top:289.0px" width="32" height="32" viewBox="0 0 32 32">
<defs><clipPath id="pr4"><circle cx="16" cy="16" r="16"/></clipPath></defs>
<g clip-path="url(#pr4)"><rect width="32" height="32" fill="#2f4a2a"/><rect x="20" width="32" height="32" fill="#4a6a38"/><rect x="12.8" y="17.5" width="4.4" height="6" fill="#d8a88a"/><path d="M2 33 Q3 22.5 15 22.5 Q29 22.5 30 33 Z" fill="#2a6ad0"/><path d="M16 22.5 Q26 22.5 29 33 L18 33 Z" fill="#eeeeee"/><ellipse cx="15" cy="13.5" rx="5.6" ry="7" fill="#d8a88a"/><path d="M9 11.5 Q8.6 4.5 15 4.5 Q21.4 4.5 21 11.5 Q15 7.5 9 11.5 Z" fill="#4a3428"/></g></svg>
<svg class="a" style="left:1502.0px;top:337.0px" width="32" height="32" viewBox="0 0 32 32">
<defs><clipPath id="pr5"><circle cx="16" cy="16" r="16"/></clipPath></defs>
<g clip-path="url(#pr5)"><rect width="32" height="32" fill="#8a5040"/><rect x="20" width="32" height="32" fill="#b0603a"/><rect x="12.8" y="18" width="4.4" height="6" fill="#caa08a"/><path d="M2 33 Q3 23 15 23 Q29 23 30 33 Z" fill="#9a9a9a"/><ellipse cx="15" cy="14" rx="5.6" ry="7" fill="#caa08a"/><path d="M9.8 15 Q10 21 15 21.2 Q20 21 20.2 15 Q15 18 9.8 15 Z" fill="#6a5040"/><path d="M9 12 Q8.6 5 15 5 Q21.4 5 21 12 Q15 8 9 12 Z" fill="#4a3a30"/></g></svg>
<div class="a" style="left:1502px;top:385px;width:32px;height:32px;background:#2a8db0;border-radius:50%"></div>
<div class="t" style="left:1502px;top:395px;font-size:13px;line-height:13px;font-weight:700;color:#fff;width:32px;text-align:center">JK</div>
<div class="a" style="left:1524px;top:406px;width:11px;height:11px;background:#3e9079;border-radius:50%;box-shadow:0 0 0 1.5px #fff"></div>
<svg class="a" style="left:1502.0px;top:433.0px" width="32" height="32" viewBox="0 0 32 32">
<defs><clipPath id="pr7"><circle cx="16" cy="16" r="16"/></clipPath></defs>
<g clip-path="url(#pr7)"><rect width="32" height="32" fill="#3a3632"/><rect x="13.8" y="20" width="4.4" height="6" fill="#b88868"/><path d="M2 33 Q3 25 16 25 Q29 25 30 33 Z" fill="#1e1e1e"/><ellipse cx="16" cy="16" rx="5.6" ry="7" fill="#b88868"/><path d="M8 13 Q8 5 16 5 Q24 5 24 13 Z" fill="#1c1a18"/></g></svg>
<svg class="a" style="left:1502.0px;top:481.0px" width="32" height="32" viewBox="0 0 32 32">
<defs><clipPath id="pr8"><circle cx="16" cy="16" r="16"/></clipPath></defs>
<g clip-path="url(#pr8)"><rect width="32" height="32" fill="#e0ddd8"/><rect x="12.8" y="19" width="4.4" height="6" fill="#6a4838"/><path d="M2 33 Q3 24 15 24 Q29 24 30 33 Z" fill="#1e2436"/><path d="M16 24 Q26 24 29 33 L18 33 Z" fill="#8a9ab0"/><ellipse cx="15" cy="15" rx="5.6" ry="7" fill="#6a4838"/><path d="M9 15 Q7 4 16 4 Q22 5 20.6 12 Q15 8 9 15 Z" fill="#1a1410"/></g></svg>
<svg class="a" style="left:1502.0px;top:529.0px" width="32" height="32" viewBox="0 0 32 32">
<defs><clipPath id="pr9"><circle cx="16" cy="16" r="16"/></clipPath></defs>
<g clip-path="url(#pr9)"><rect width="32" height="32" fill="#a0a8b6"/><path d="M15 5 Q6 5 6.5 15 Q6.5 23 5 27 L25 27 Q23.5 23 23.5 15 Q24 5 15 5 Z" fill="#2a1e18"/><rect x="12.8" y="19" width="4.4" height="6" fill="#f0c8b4"/><path d="M2 33 Q3 24 15 24 Q29 24 30 33 Z" fill="#e8d0c8"/><ellipse cx="15" cy="15" rx="5.6" ry="7" fill="#f0c8b4"/><path d="M9.2 14 Q10 7 15 7 Q20 7 20.8 14 Q17 9 9.2 14 Z" fill="#2a1e18"/></g><circle cx="16" cy="16" r="14.7" fill="none" stroke="#f0dc3a" stroke-width="2.6"/></svg>
<svg class="a" style="left:1502.0px;top:577.0px" width="32" height="32" viewBox="0 0 32 32">
<defs><clipPath id="pr10"><circle cx="16" cy="16" r="16"/></clipPath></defs>
<g clip-path="url(#pr10)"><rect width="32" height="32" fill="#b8a880"/><rect x="0" width="32" height="32" fill="#8aa060"/><path d="M16 5 Q7 5 7.5 15 Q7.5 23 6 27 L26 27 Q24.5 23 24.5 15 Q25 5 16 5 Z" fill="#c89a68"/><rect x="13.8" y="19" width="4.4" height="6" fill="#f0c8b0"/><path d="M2 33 Q3 24 16 24 Q29 24 30 33 Z" fill="#6a6a8a"/><ellipse cx="16" cy="15" rx="5.6" ry="7" fill="#f0c8b0"/><path d="M10.2 14 Q11 7 16 7 Q21 7 21.8 14 Q18 9 10.2 14 Z" fill="#c89a68"/></g><circle cx="16" cy="16" r="14.7" fill="none" stroke="#9b4fb0" stroke-width="2.6"/></svg>
<div class="a" style="left:1497px;top:815px;width:40px;height:40px;background:#2a8db0;border-radius:50%"></div>
<svg class="a" style="left:1505.6px;top:825px" width="20" height="20" viewBox="0 0 20 20"><path d="M4 18.2 L5.2 14.6 A8 8 0 1 1 8.4 17 Z" fill="none" stroke="#fff" stroke-width="1.9" stroke-linejoin="round"/></svg>
</body></html>
